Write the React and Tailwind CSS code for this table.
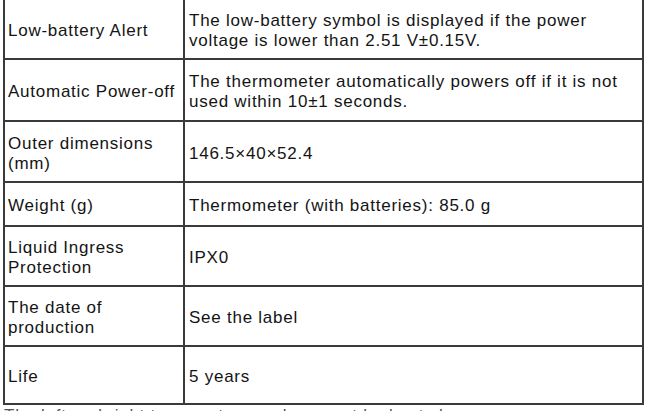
import React from 'react';

// Spec rows: label, value, row height (px, incl. bottom rule)
const specs = [
  {
    label: 'Low-battery Alert',
    value: 'The low-battery symbol is displayed if the power voltage is lower than 2.51 V±0.15V.',
    h: 'h-[60px]',
  },
  {
    label: 'Automatic Power-off',
    value: 'The thermometer automatically powers off if it is not used within 10±1 seconds.',
    h: 'h-[62px]',
  },
  { label: 'Outer dimensions (mm)', value: '146.5×40×52.4', h: 'h-[61px]' },
  { label: 'Weight (g)', value: 'Thermometer (with batteries): 85.0 g', h: 'h-[44px]' },
  { label: 'Liquid Ingress Protection', value: 'IPX0', h: 'h-[60px]' },
  { label: 'The date of production', value: 'See the label', h: 'h-[60px]' },
  { label: 'Life', value: '5 years', h: 'h-[58px]' },
];

const App = () => {
  return (
    <div
      className="w-[648px] h-[411px] overflow-hidden bg-white text-[#141414] text-[17px] leading-[20px] tracking-[0.75px]"
      style={{ fontFamily: '"Liberation Sans", Arial, sans-serif' }}
    >
      <div className="ml-[3px] mt-[-2px] w-[641px] border-2 border-b-0 border-[#3a3a3a]">
        {specs.map((row, i) => (
          <div key={i} className={`flex ${row.h} border-b-2 border-[#3a3a3a]`}>
            <div className="w-[180px] shrink-0 border-r-2 border-[#3a3a3a] pl-[3px] pr-[1px] pt-[4px] flex items-center">
              <span>{row.label}</span>
            </div>
            <div className="flex-1 pl-[4px] pr-1 pt-[4px] flex items-center">
              <span>{row.value}</span>
            </div>
          </div>
        ))}
      </div>

      {/* Paragraph that continues below the table (cut off) */}
      <p className="ml-[4px] mt-[1px] text-[#555] whitespace-nowrap">
        The left and right temperature probes must be kept clean.
      </p>
    </div>
  );
};

export default App;
